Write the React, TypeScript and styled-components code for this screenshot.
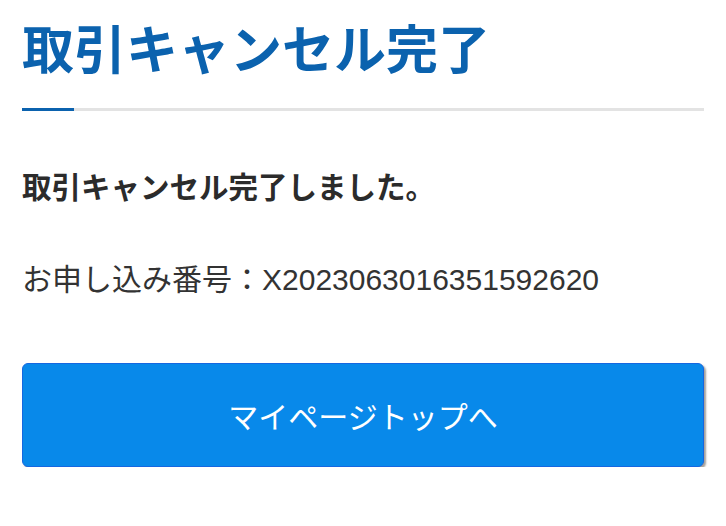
import React from 'react';
import styled, { createGlobalStyle } from 'styled-components';

const GlobalStyle = createGlobalStyle`
  html, body {
    margin: 0;
    padding: 0;
    background: #ffffff;
  }
  body {
    font-family: "Liberation Sans", "Noto Sans CJK JP", sans-serif;
    color: #333333;
  }
`;

const Page = styled.main`
  padding: 12px 22px 0 22px;
`;

const Title = styled.h1`
  position: relative;
  margin: 0;
  padding-bottom: 18px;
  font-size: 52px;
  line-height: 78px;
  font-weight: 700;
  color: #0b62ae;
  border-bottom: 3px solid #e3e3e3;

  &::after {
    content: '';
    position: absolute;
    left: 0;
    bottom: -3px;
    width: 52px;
    height: 3px;
    background: #0b62ae;
  }
`;

const Message = styled.p`
  margin: 56px 0 0 0;
  font-size: 29.5px;
  line-height: 42px;
  font-weight: 700;
  color: #2b2b2b;
`;

const OrderNumber = styled.p`
  margin: 50px 0 0 0;
  font-size: 30px;
  line-height: 42px;
  font-weight: 400;
  color: #333333;
`;

const TopButton = styled.a`
  display: flex;
  align-items: center;
  justify-content: center;
  box-sizing: border-box;
  margin-top: 62px;
  height: 104px;
  border: 1px solid #1667e0;
  border-radius: 6px;
  background: #0889ea;
  box-shadow: 2px 2px 2px rgba(90, 80, 70, 0.55);
  color: #ffffff;
  font-size: 30px;
  font-weight: 400;
  text-decoration: none;
  cursor: pointer;
`;

const App: React.FC = () => {
  return (
    <>
      <GlobalStyle />
      <Page>
        <Title>取引キャンセル完了</Title>
        <Message>取引キャンセル完了しました。</Message>
        <OrderNumber>お申し込み番号：X2023063016351592620</OrderNumber>
        <TopButton href="#">マイページトップへ</TopButton>
      </Page>
    </>
  );
};

export default App;
